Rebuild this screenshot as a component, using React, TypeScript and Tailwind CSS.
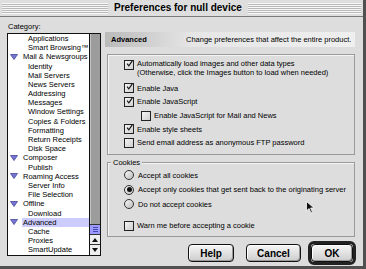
import React from 'react';

const categories: { label: string; parent?: boolean; selected?: boolean }[] = [
  { label: 'Applications' },
  { label: 'Smart Browsing™' },
  { label: 'Mail & Newsgroups', parent: true },
  { label: 'Identity' },
  { label: 'Mail Servers' },
  { label: 'News Servers' },
  { label: 'Addressing' },
  { label: 'Messages' },
  { label: 'Window Settings' },
  { label: 'Copies & Folders' },
  { label: 'Formatting' },
  { label: 'Return Receipts' },
  { label: 'Disk Space' },
  { label: 'Composer', parent: true },
  { label: 'Publish' },
  { label: 'Roaming Access', parent: true },
  { label: 'Server Info' },
  { label: 'File Selection' },
  { label: 'Offline', parent: true },
  { label: 'Download' },
  { label: 'Advanced', parent: true, selected: true },
  { label: 'Cache' },
  { label: 'Proxies' },
  { label: 'SmartUpdate' },
];

function Checkbox({ checked }: { checked?: boolean }) {
  return (
    <div className="w-[10px] h-[10px] shrink-0 border border-[#222] bg-gradient-to-br from-[#f4f4f4] to-[#cfcfcf] flex items-center justify-center">
      {checked && (
        <svg width="10" height="10" viewBox="0 0 10 10" className="-mt-[2px] ml-[1px]">
          <path d="M1.5 4.5 L4 7.5 L9 0.5" stroke="#111" strokeWidth="1.6" fill="none" />
        </svg>
      )}
    </div>
  );
}

function Radio({ checked }: { checked?: boolean }) {
  return (
    <div className="w-[10px] h-[10px] shrink-0 rounded-full border border-[#333] bg-gradient-to-br from-[#f6f6f6] to-[#bdbdbd] flex items-center justify-center">
      {checked && <div className="w-[5px] h-[5px] rounded-full bg-[#111]" />}
    </div>
  );
}

function Triangle() {
  return (
    <svg width="8" height="6" viewBox="0 0 8 6" className="shrink-0">
      <path d="M0.5 0.5 H7.5 L4 5.5 Z" fill="#7676d0" stroke="#45459a" strokeWidth="0.8" />
    </svg>
  );
}

function Stripes({ className }: { className: string }) {
  return (
    <div
      className={`h-[11px] bg-[repeating-linear-gradient(to_bottom,#f7f7f7_0px,#f7f7f7_1px,#b9b9b9_1px,#b9b9b9_2px)] ${className}`}
    />
  );
}

function Button({ label, w }: { label: string; w: string }) {
  return (
    <div
      className={`${w} h-[18px] rounded-[4px] border border-[#111] bg-gradient-to-b from-[#f6f6f6] to-[#cdcdcd] shadow-[inset_-1px_-1px_0_#999,inset_1px_1px_0_#fff] flex items-center justify-center text-[10px] font-bold text-black`}
    >
      {label}
    </div>
  );
}

export default function App() {
  return (
    <div className="w-[366px] h-[269px] bg-[#505050] overflow-hidden font-['Liberation_Sans',Arial,sans-serif] text-black">
      <div className="relative w-[363px] h-[266px] bg-[#dddddd] flex flex-col">
        {/* Title bar */}
        <div className="h-[17px] shrink-0 bg-[#dedede] border-b border-[#7a7a7a] flex items-center px-[2px] gap-[5px]">
          <Stripes className="w-[106px]" />
          <div className="text-[10px] font-bold whitespace-nowrap leading-none px-[1px]">
            Preferences for null device
          </div>
          <Stripes className="flex-1" />
        </div>

        <div className="flex flex-1">
          {/* Category list */}
          <div className="w-[105px] pl-[7px] shrink-0">
            <div className="text-[7.5px] leading-[9px] mt-[5px] mb-[2px] pl-[1px]">Category:</div>
            <div className="w-[94px] h-[223px] border border-[#111] bg-white flex">
              <div className="flex-1">
                {categories.map((c) => (
                  <div key={c.label} className="h-[9.2px] flex items-center text-[7.5px] whitespace-nowrap">
                    {c.parent ? (
                      <div className="flex items-center">
                        <div className="w-[14px] pl-[2px] flex items-center">
                          <Triangle />
                        </div>
                        <span className={`px-[1px] leading-[9.2px] ${c.selected ? 'bg-[#ccccff] w-[67px]' : ''}`}>{c.label}</span>
                      </div>
                    ) : (
                      <span className="pl-[20px]">{c.label}</span>
                    )}
                  </div>
                ))}
              </div>
              <div className="w-[11px] border-l border-[#111] flex flex-col">
                <div className="flex-1 bg-[#9c9c9c] shadow-[inset_1px_0_0_#c4c4c4]" />
                <div className="h-[11px] bg-[#9a9aff] border-y border-[#333] flex flex-col items-center justify-center gap-[1px]">
                  <div className="w-[5px] h-px bg-[#4848b8]" />
                  <div className="w-[5px] h-px bg-[#4848b8]" />
                  <div className="w-[5px] h-px bg-[#4848b8]" />
                </div>
                <div className="h-[10px] bg-[#eeeeee] border-b border-[#333] flex items-center justify-center">
                  <svg width="6" height="4" viewBox="0 0 6 4">
                    <path d="M0 4 L3 0 L6 4 Z" fill="#111" />
                  </svg>
                </div>
                <div className="h-[10px] bg-[#eeeeee] flex items-center justify-center">
                  <svg width="6" height="4" viewBox="0 0 6 4">
                    <path d="M0 0 L6 0 L3 4 Z" fill="#111" />
                  </svg>
                </div>
              </div>
            </div>
          </div>

          {/* Right panel */}
          <div className="w-[251px] shrink-0 flex flex-col">
            <div className="mt-[15px] h-[15px] w-[250px] flex items-center bg-gradient-to-r from-[#bababa] via-[#e6e6e6] via-35% to-[#efefef] text-[7.5px]">
              <span className="font-bold pl-[6px] w-[81px]">Advanced</span>
              <span>Change preferences that affect the entire product.</span>
            </div>

            {/* Main options group */}
            <div className="mt-[7px] ml-[2px] w-[248px] h-[101px] border border-[#9a9a9a] shadow-[inset_1px_1px_0_#f4f4f4] pl-[16px] pt-[4px] text-[7.5px]">
              <div className="flex gap-[3px] items-start">
                <div className="mt-[1px]">
                  <Checkbox checked />
                </div>
                <div className="leading-[9px]">
                  <div>Automatically load images and other data types</div>
                  <div>(Otherwise, click the Images button to load when needed)</div>
                </div>
              </div>
              <div className="mt-[4.5px]">
                <div className="h-[13.7px] flex items-center gap-[3px]">
                  <Checkbox checked />
                  <span>Enable Java</span>
                </div>
                <div className="h-[13.7px] flex items-center gap-[3px]">
                  <Checkbox checked />
                  <span>Enable JavaScript</span>
                </div>
                <div className="h-[13.7px] flex items-center gap-[3px] pl-[17px]">
                  <Checkbox />
                  <span>Enable JavaScript for Mail and News</span>
                </div>
                <div className="h-[13.7px] flex items-center gap-[3px]">
                  <Checkbox checked />
                  <span>Enable style sheets</span>
                </div>
                <div className="h-[13.7px] flex items-center gap-[3px]">
                  <Checkbox />
                  <span>Send email address as anonymous FTP password</span>
                </div>
              </div>
            </div>

            {/* Cookies group */}
            <div className="relative mt-[7px] ml-[2px] w-[248px] h-[75px] border border-[#9a9a9a] shadow-[inset_1px_1px_0_#f4f4f4] pl-[16px] pt-[5px] text-[7.5px]">
              <div className="absolute -top-[5px] left-[3px] bg-[#dddddd] px-[2px] leading-[9px]">Cookies</div>
              <div className="h-[14.5px] flex items-center gap-[4px]">
                <Radio />
                <span>Accept all cookies</span>
              </div>
              <div className="h-[14.5px] flex items-center gap-[4px]">
                <Radio checked />
                <span>Accept only cookies that get sent back to the originating server</span>
              </div>
              <div className="h-[14.5px] flex items-center gap-[4px]">
                <Radio />
                <span>Do not accept cookies</span>
              </div>
              <div className="mt-[7.5px] h-[14px] flex items-center gap-[3px]">
                <Checkbox />
                <span>Warn me before accepting a cookie</span>
              </div>
            </div>

            {/* Buttons */}
            <div className="mt-[4px] flex items-center justify-end gap-[3px]">
              <Button label="Help" w="w-[46px]" />
              <div className="w-[6px]" />
              <Button label="Cancel" w="w-[55px]" />
              <div className="w-[1px]" />
              <div className="w-[48px] h-[24px] rounded-[6px] border-[3px] border-[#222] bg-[#dddddd] flex items-center justify-center">
                <Button label="OK" w="w-[42px]" />
              </div>
            </div>
          </div>
        </div>

        {/* Mouse pointer */}
        <svg width="9" height="13" viewBox="0 0 9 13" className="absolute left-[306px] top-[201px]">
          <path d="M0.5 0.5 L0.5 10 L3 7.5 L5 12 L6.5 11.3 L4.6 7 L8 7 Z" fill="#111" stroke="#fff" strokeWidth="0.8" />
        </svg>
      </div>
    </div>
  );
}
